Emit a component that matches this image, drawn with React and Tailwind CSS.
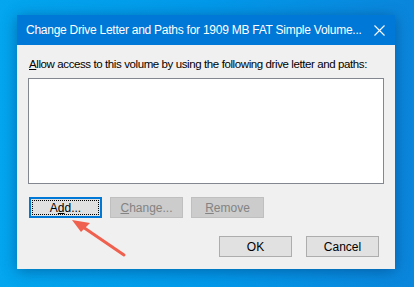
const font = { fontFamily: '"Liberation Sans", Arial, sans-serif' };

function WinButton({ children, disabled, focused }) {
  if (focused) {
    return (
      <button className="relative w-[73px] h-[21px] bg-[#e1e1e1] border-2 border-[#0078d7] text-[12px] text-black flex items-center justify-center">
        <span className="absolute inset-[1px] border border-dotted border-black" />
        <span className="relative">{children}</span>
      </button>
    );
  }
  return (
    <button
      disabled={disabled}
      className={
        disabled
          ? 'w-[73px] h-[21px] bg-[#cccccc] border border-[#bfbfbf] text-[12px] text-[#838383] flex items-center justify-center'
          : 'w-[73px] h-[21px] bg-[#e1e1e1] border border-[#adadad] text-[12px] text-black flex items-center justify-center'
      }
    >
      {children}
    </button>
  );
}

export default function App() {
  return (
    <div
      className="relative w-[414px] h-[287px] overflow-hidden bg-gradient-to-r from-[#03a6ef] via-[#0299ea] to-[#0a86dc] pl-[17px] pt-[15px]"
      style={font}
    >
      <div className="w-[378px] h-[254px] flex flex-col bg-[#f0f0f0] shadow-[0_2px_14px_rgba(0,40,90,0.45)]">
        {/* title bar */}
        <div className="h-[30px] bg-[#0078d7] text-white flex items-center pl-[9px] pr-[10px]">
          <span className="flex-1 min-w-0 text-[12px] tracking-[-0.25px] whitespace-nowrap">
            Change Drive Letter and Paths for 1909 MB FAT Simple Volume...
          </span>
          <svg width="11" height="11" viewBox="0 0 11 11" className="ml-2 shrink-0">
            <path d="M0.5 0.5 L10.5 10.5 M10.5 0.5 L0.5 10.5" stroke="white" strokeWidth="1.1" />
          </svg>
        </div>

        {/* body */}
        <div className="flex-1 flex flex-col pt-[11px] pl-[11px] pr-[11px]">
          <p className="text-[11.5px] tracking-[-0.4px] leading-[16px] text-black pl-[1px] whitespace-nowrap">
            <span className="underline">A</span>llow access to this volume by using the following drive letter and paths:
          </p>
          <div className="mt-[6px] w-[356px] h-[106px] bg-white border border-[#828790]" />

          <div className="mt-[13px] pl-[1px] flex gap-[8px]">
            <WinButton focused>
              A<span className="underline">d</span>d...
            </WinButton>
            <WinButton disabled>
              <span className="underline">C</span>hange...
            </WinButton>
            <WinButton disabled>
              <span className="underline">R</span>emove
            </WinButton>
          </div>

          <div className="mt-[18px] flex justify-end gap-[14px] pr-[5px]">
            <WinButton>OK</WinButton>
            <WinButton>Cancel</WinButton>
          </div>
        </div>
      </div>

      {/* annotation arrow */}
      <svg className="absolute left-0 top-0" width="414" height="287" viewBox="0 0 414 287">
        <line x1="124" y1="255" x2="80" y2="225" stroke="#f0604e" strokeWidth="3" strokeLinecap="round" />
        <polygon points="72,220 90,223 81,232" fill="#f0604e" />
      </svg>
    </div>
  );
}
